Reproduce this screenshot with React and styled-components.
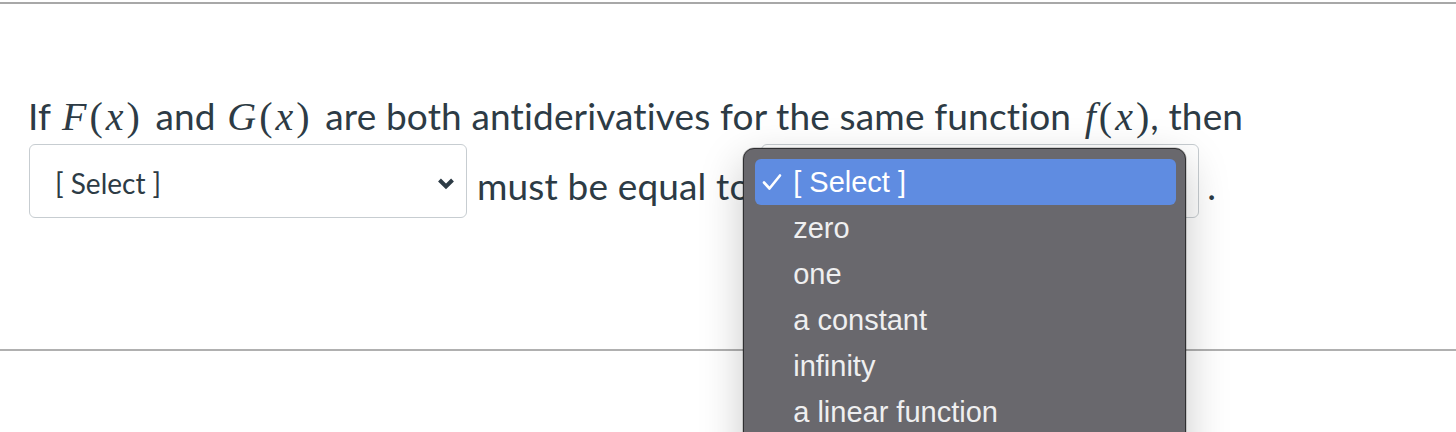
import styled, { createGlobalStyle } from "styled-components";

const Global = createGlobalStyle`
  html, body {
    min-height: 432px;
  }
  body {
    margin: 0;
    background: #fff;
    font-family: Lato, "Open Sans", sans-serif;
    color: #2d3b45;
    overflow: hidden;
  }
`;

const Question = styled.div`
  margin-top: 2px;
  border-top: 2px solid #a8a8a8;
  border-bottom: 2px solid #b0b0b0;
  padding: 85px 28px 131px;
`;

const Text = styled.p`
  margin: 0;
  font-size: 37px;
  line-height: 54px;
  letter-spacing: 0.15px;
`;

const Math = styled.span`
  font-family: "Liberation Serif", "DejaVu Serif", serif;
  font-size: 40px;
  letter-spacing: 3px;
  margin: 0 ${(p) => (p.$end ? -2 : 3)}px 0 ${(p) => (p.$end ? 4 : 2)}px;
`;

const V = styled.i`
  font-style: italic;
`;

const Select = styled.span`
  position: relative;
  display: inline-flex;
  align-items: center;
  justify-content: space-between;
  box-sizing: border-box;
  width: 438px;
  height: 74px;
  padding: 5px 11px 0 25px;
  margin: 0 ${(p) => p.$gap}px 0 1px;
  border: 1px solid #c7cdd1;
  border-radius: 6px;
  background: #fff;
  font-size: 28px;
  line-height: 1.2;
  letter-spacing: 0;
  vertical-align: 6px;
`;

const Chevron = () => (
  <svg width="18" height="13" viewBox="0 0 18 13">
    <path d="M2.5 3 L9 9.5 L15.5 3" fill="none" stroke="#2d3b45" strokeWidth="4" />
  </svg>
);

const Menu = styled.ul`
  position: absolute;
  top: 3px;
  left: -19px;
  z-index: 5;
  width: 443px;
  box-sizing: border-box;
  margin: 0;
  padding: 10px 9px 10px 11px;
  list-style: none;
  background: #69686d;
  border: 1px solid #2f2f31;
  border-radius: 11px;
  box-shadow: 0 14px 44px rgba(0, 0, 0, 0.22), 0 0 0 0.5px rgba(0, 0, 0, 0.3);
  font-family: "Liberation Sans", Arial, sans-serif;
  font-size: 29px;
`;

const Item = styled.li`
  display: flex;
  align-items: center;
  height: 46px;
  padding-left: 38px;
  border-radius: 6px;
  color: ${(p) => (p.$on ? "#ffffff" : "#efeff0")};
  background: ${(p) => (p.$on ? "#5f8ce1" : "transparent")};
  position: relative;
`;

const Check = styled.svg`
  position: absolute;
  left: 7px;
  top: 14px;
`;

const options = ["[ Select ]", "zero", "one", "a constant", "infinity", "a linear function", "a quadratic"];

const App = () => {
  return (
    <>
      <Global />
      <Question>
        <Text>
          If{" "}
          <Math>
            <V>F</V>(<V>x</V>)
          </Math>{" "}
          and{" "}
          <Math>
            <V>G</V>(<V>x</V>)
          </Math>{" "}
          are both antiderivatives for the same function{" "}
          <Math $end>
            <V>f</V>(<V>x</V>)
          </Math>
          , then{" "}
          <Select $gap={10}>
            <span>[ Select ]</span>
            <Chevron />
          </Select>
          must be equal to{" "}
          <Select $gap={8}>
            <span>[ Select ]</span>
            <Chevron />
            <Menu>
              {options.map((o, i) => (
                <Item key={o} $on={i === 0}>
                  {i === 0 && (
                    <Check width="20" height="18" viewBox="0 0 20 18">
                      <path d="M2 9.5 L7.5 15.5 L18 2.5" fill="none" stroke="#fff" strokeWidth="2.6" strokeLinecap="round" strokeLinejoin="round" />
                    </Check>
                  )}
                  {o}
                </Item>
              ))}
            </Menu>
          </Select>
          .
        </Text>
      </Question>
    </>
  );
};

export default App;
